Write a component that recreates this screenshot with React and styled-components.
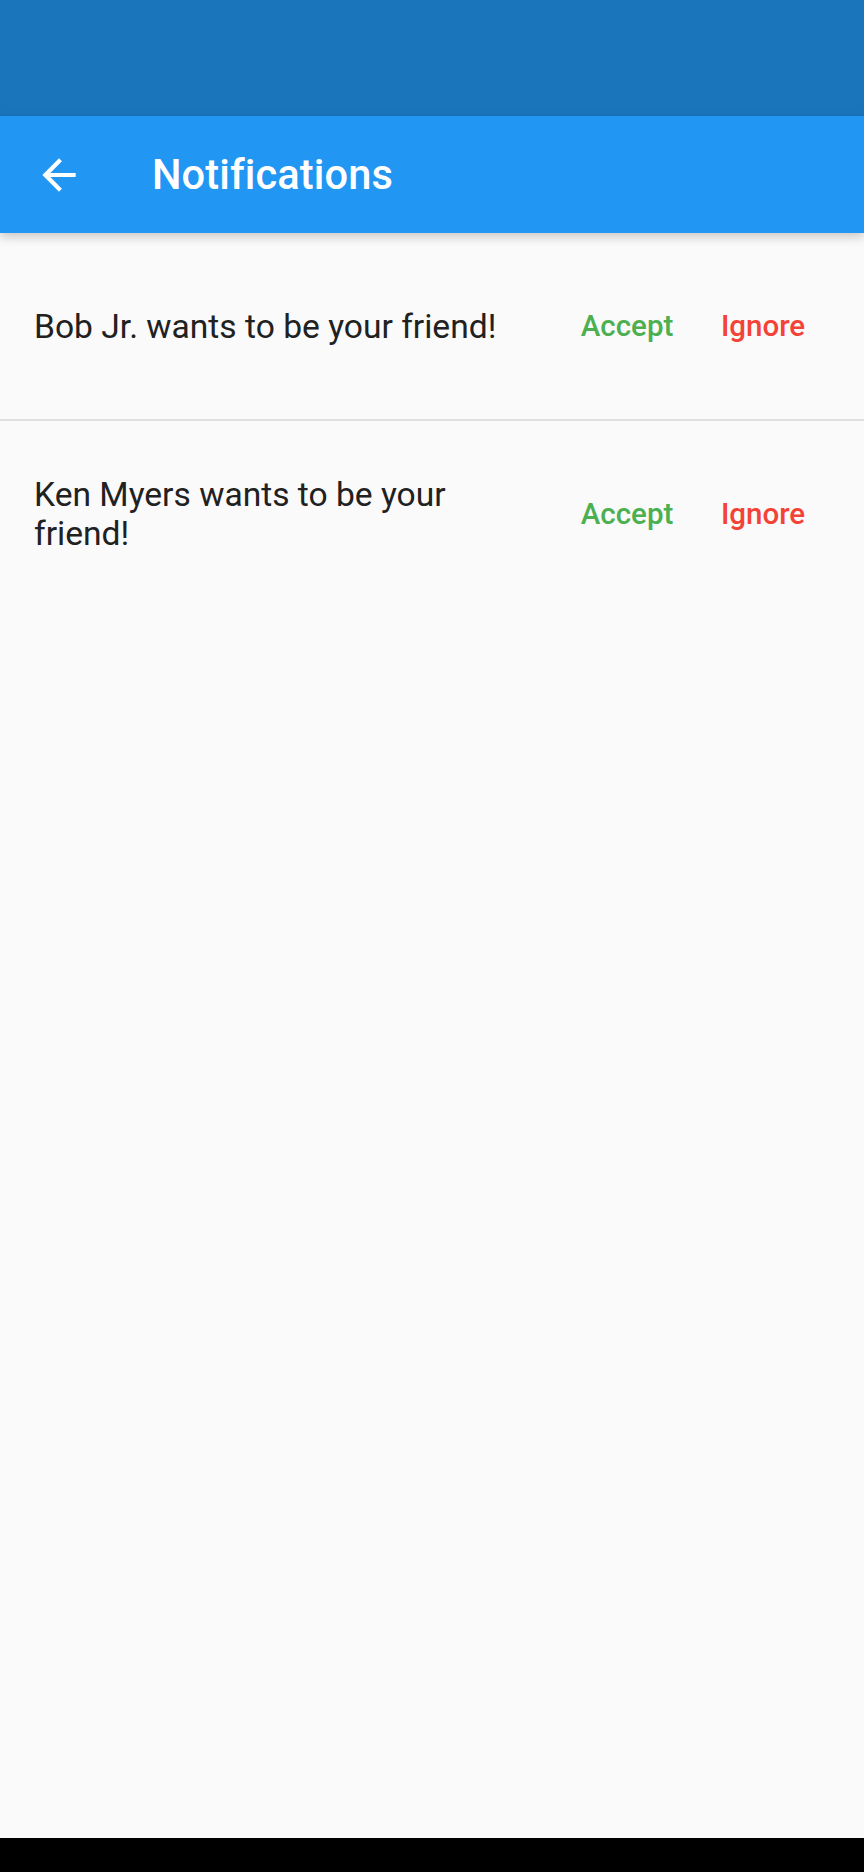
import React from "react";
import styled, { createGlobalStyle } from "styled-components";

const GlobalStyle = createGlobalStyle`
  html, body {
    margin: 0;
    padding: 0;
    background: #fafafa;
  }
  body {
    font-family: Roboto, "Noto Sans", sans-serif;
  }
`;

const Screen = styled.div`
  width: 864px;
  height: 1872px;
  display: flex;
  flex-direction: column;
  background: #fafafa;
  overflow: hidden;
`;

const StatusBar = styled.div`
  height: 116px;
  background: #1a75bb;
  flex-shrink: 0;
`;

const AppBar = styled.header`
  height: 117px;
  background: #2196f3;
  display: flex;
  align-items: center;
  flex-shrink: 0;
  box-shadow: 0 4px 10px rgba(0, 0, 0, 0.2);
  position: relative;
  z-index: 1;
`;

const BackButton = styled.button`
  width: 118px;
  height: 117px;
  display: flex;
  align-items: center;
  justify-content: center;
  background: none;
  border: none;
  padding: 0;
  color: #fff;
`;

const Title = styled.h1`
  margin: 0 0 0 34px;
  color: #fff;
  font-size: 41.6px;
  font-weight: 500;
  letter-spacing: 0.1px;
`;

const List = styled.main`
  flex: 1;
  display: flex;
  flex-direction: column;
`;

const Row = styled.div`
  min-height: 186px;
  display: flex;
  align-items: center;
  padding: 0 34px 0 34px;
  border-bottom: ${(p) => (p.$last ? "none" : "2px solid #e0e0e0")};
`;

const Message = styled.p`
  flex: 1;
  margin: 0;
  padding-right: 40px;
  color: #212121;
  font-size: 33.6px;
  line-height: 39px;
`;

const Action = styled.button`
  min-width: 134px;
  height: 76px;
  padding: 0 17px;
  background: none;
  border: none;
  font-family: Roboto, "Noto Sans", sans-serif;
  font-size: 29.5px;
  font-weight: 500;
  color: ${(p) => p.$color};
  & + & {
    margin-left: 2px;
  }
`;

const BottomBar = styled.div`
  height: 34px;
  background: #000;
  flex-shrink: 0;
`;

const requests = ["Bob Jr.", "Ken Myers"];

export default function App() {
  return (
    <>
      <GlobalStyle />
      <Screen>
        <StatusBar />
        <AppBar>
          <BackButton aria-label="Back">
            <svg width="50" height="50" viewBox="0 0 24 24" fill="currentColor">
              <path d="M20 11H7.83l5.59-5.59L12 4l-8 8 8 8 1.41-1.41L7.83 13H20v-2z" />
            </svg>
          </BackButton>
          <Title>Notifications</Title>
        </AppBar>
        <List>
          {requests.map((name, i) => (
            <Row key={name} $last={i === requests.length - 1}>
              <Message>{name} wants to be your friend!</Message>
              <Action $color="#4caf50">Accept</Action>
              <Action $color="#f44336">Ignore</Action>
            </Row>
          ))}
        </List>
        <BottomBar />
      </Screen>
    </>
  );
}
